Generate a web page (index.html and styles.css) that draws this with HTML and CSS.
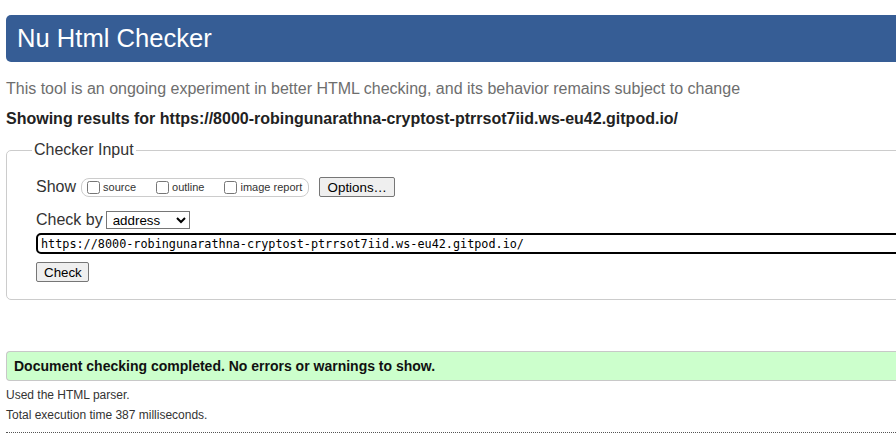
FILE: index.html
```html
<!DOCTYPE html>
<html lang="en">
<head>
<meta charset="utf-8">
<title>Nu Html Checker</title>
<link rel="stylesheet" href="styles.css">
</head>
<body>
<div class="page">
  <h1 class="title">Nu Html Checker</h1>
  <p class="intro">This tool is an ongoing experiment in better HTML checking, and its behavior remains subject to change</p>
  <p class="showing">Showing results for https://8000-robingunarathna-cryptost-ptrrsot7iid.ws-eu42.gitpod.io/</p>

  <fieldset class="checker">
    <legend class="legend">Checker Input</legend>
    <div class="fields">
      <div class="row row-show">
        <span class="label">Show</span>
        <span class="opts">
          <label class="opt"><input type="checkbox" class="cb"><span>source</span></label>
          <label class="opt"><input type="checkbox" class="cb"><span>outline</span></label>
          <label class="opt"><input type="checkbox" class="cb"><span>image report</span></label>
        </span>
        <button class="btn btn-options" type="button">Options…</button>
      </div>
      <div class="row row-by">
        <span class="label">Check by</span>
        <select class="sel"><option>address</option></select>
      </div>
      <div class="row row-url">
        <input class="url" type="text" value="https://8000-robingunarathna-cryptost-ptrrsot7iid.ws-eu42.gitpod.io/">
      </div>
      <div class="row row-check">
        <button class="btn btn-check" type="button">Check</button>
      </div>
    </div>
  </fieldset>

  <p class="success">Document checking completed. No errors or warnings to show.</p>
  <p class="details">Used the HTML parser.</p>
  <p class="details">Total execution time 387 milliseconds.</p>
  <div class="rule"></div>
</div>
</body>
</html>
```
FILE: styles.css
```css
html {
  overflow: hidden;
  background: #fff;
}
body {
  margin: 0;
  font-family: "Liberation Sans", Arial, sans-serif;
  color: #222;
}
.page {
  margin-left: 6px;
  width: 920px;
}
.title {
  margin: 15px 0 0 0;
  height: 47px;
  line-height: 47px;
  padding-left: 11px;
  background: #365d95;
  color: #fff;
  font-weight: normal;
  font-size: 25.6px;
  border-radius: 5px 0 0 5px;
}
.intro {
  margin: 18px 0 0 0;
  font-size: 16px;
  line-height: 18px;
  color: #6e6e6e;
}
.showing {
  margin: 12px 0 0 0;
  font-size: 16px;
  line-height: 18px;
  font-weight: bold;
  color: #222;
}
.checker {
  margin: 13px 0 0 0;
  padding: 18px 0 17px 25px;
  border: 1px solid #ccc;
  border-radius: 5px 0 0 5px;
  min-width: 0;
}
.legend {
  padding: 0 2px;
  font-size: 16px;
  line-height: 18px;
  color: #333;
}
.fields {
  padding-left: 4px;
  display: flex;
  flex-direction: column;
}
.row {
  display: flex;
  align-items: center;
}
.label {
  font-size: 16px;
  color: #333;
}
.row-show {
  height: 20px;
}
.opts {
  display: inline-flex;
  align-items: center;
  height: 17px;
  margin-left: 5px;
  padding: 0 6px 0 1px;
  border: 1px solid #ccc;
  border-radius: 8px;
}
.opt {
  display: inline-flex;
  align-items: center;
  margin-right: 16px;
  font-size: 11px;
  color: #333;
}
.opt:last-child {
  margin-right: 0;
}
.cb {
  width: 13px;
  height: 13px;
  margin: 0 3px 0 4px;
}
.btn {
  font-family: "Liberation Sans", Arial, sans-serif;
  font-size: 13.33px;
  height: 20px;
  padding: 0 7px;
  background: #efefef;
  border: 1px solid #767676;
  border-radius: 2px;
  color: #000;
}
.btn-options {
  margin-left: 10px;
  width: 76px;
}
.row-by {
  margin-top: 13px;
  height: 20px;
}
.sel {
  margin-left: 3px;
  width: 84px;
  height: 18px;
  font-family: "Liberation Sans", Arial, sans-serif;
  font-size: 13.33px;
  padding: 0 0 0 2px;
  border: 1px solid #767676;
  border-radius: 0;
  background: #fff;
  color: #000;
}
.row-url {
  margin-top: 3px;
}
.url {
  box-sizing: border-box;
  width: 100%;
  height: 21px;
  padding: 0 0 0 3px;
  border: 2px solid #000;
  border-radius: 5px 0 0 5px;
  font-family: "DejaVu Sans Mono", "Liberation Mono", monospace;
  font-size: 11.8px;
  color: #000;
  outline: none;
}
.row-check {
  margin-top: 8px;
}
.btn-check {
  width: 53px;
}
.success {
  margin: 51px 0 0 0;
  height: 28px;
  line-height: 28px;
  padding-left: 7px;
  background: #ccffcc;
  border: 1px solid #c8c8c8;
  border-right: none;
  border-radius: 4px 0 0 4px;
  font-size: 14px;
  font-weight: bold;
  color: #111;
}
.details {
  margin: 7px 0 0 0;
  font-size: 12px;
  line-height: 14px;
  color: #333;
}
.details + .details {
  margin-top: 6px;
}
.rule {
  margin-top: 10px;
  border-top: 1px dotted #555;
}
```
